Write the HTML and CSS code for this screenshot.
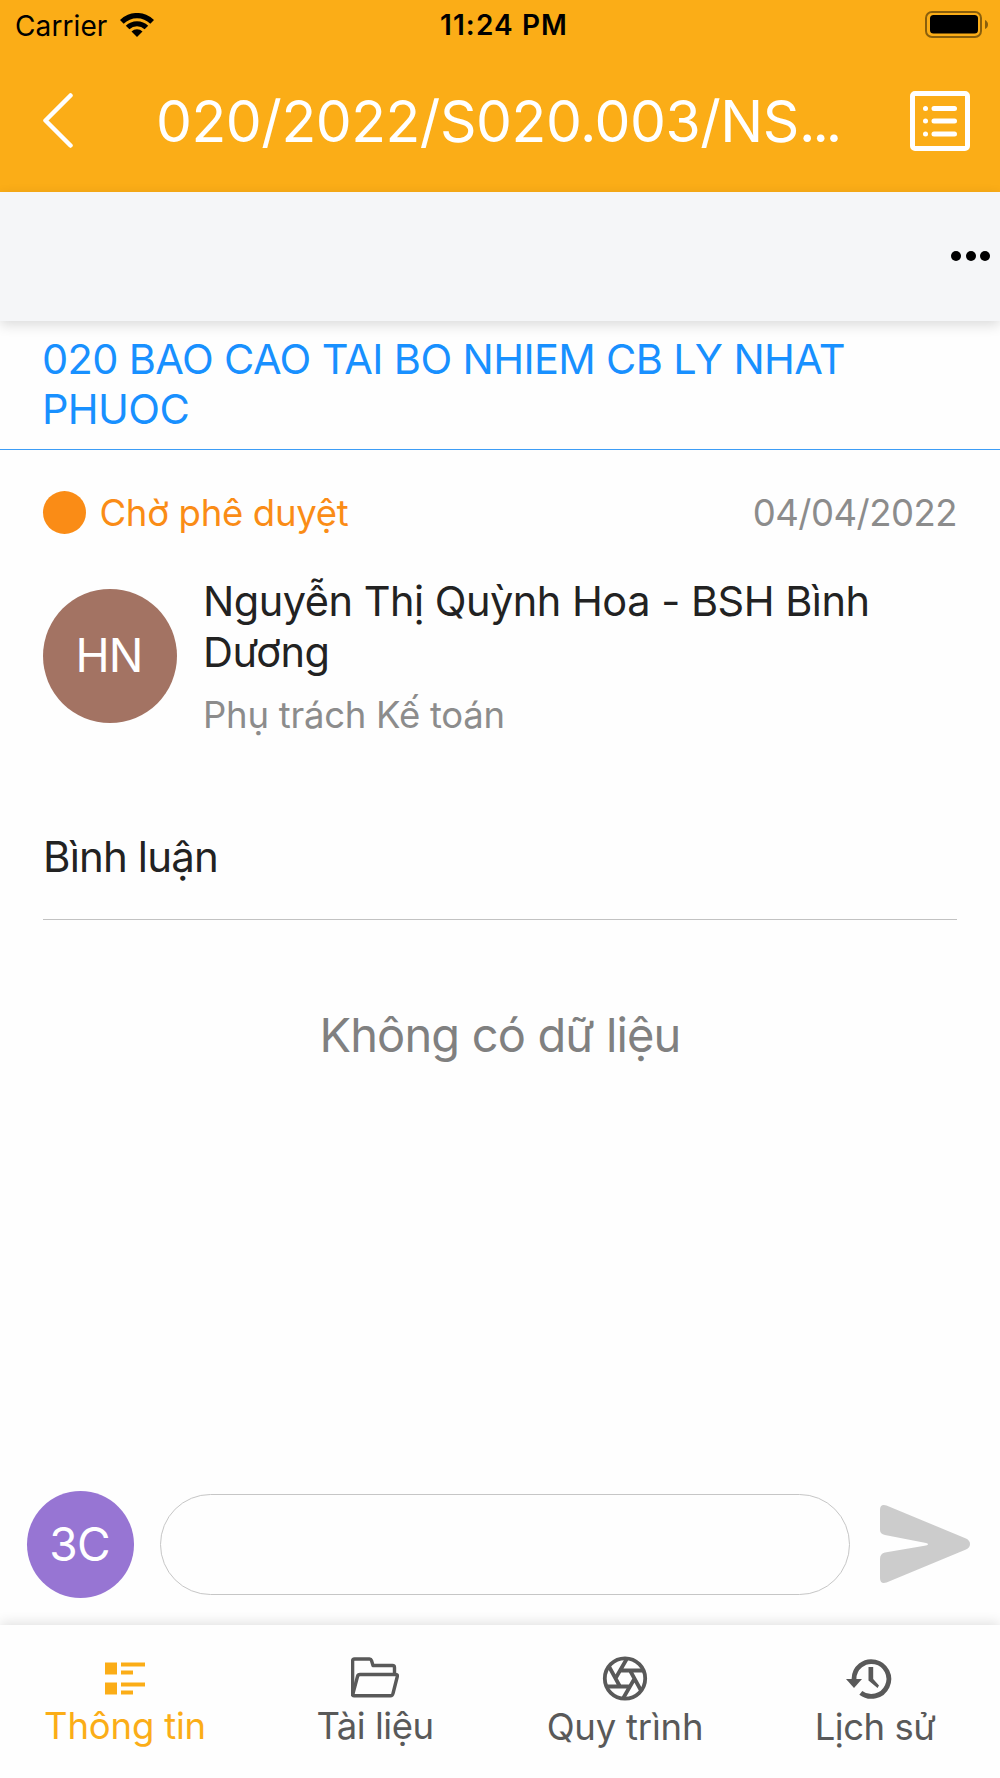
FILE: index.html
```html
<!DOCTYPE html>
<html lang="vi">
<head>
  <meta charset="UTF-8" />
  <meta name="viewport" content="width=device-width, initial-scale=1" />
  <title>Chi tiết văn bản</title>
  <link rel="stylesheet" href="styles.css">
</head>
<body>

  <header>
    <div class="status-bar">
      <div class="status-left">
        <span class="carrier">Carrier</span>
        <svg class="wifi" viewBox="0 0 34 24" width="34" height="24">
          <path d="M0 7 A24 24 0 0 1 34 7 L30.3 10.7 A19 19 0 0 0 3.7 10.7 Z" />
          <path d="M5.8 12.7 A16 16 0 0 1 28.2 12.7 L24.6 16.2 A11 11 0 0 0 9.4 16.2 Z" />
          <path d="M11.5 18.4 A8 8 0 0 1 22.5 18.4 L17 24 Z" />
        </svg>
      </div>
      <span class="clock">11:24 PM</span>
      <div class="status-right">
        <svg class="battery" viewBox="0 0 63 27" width="63" height="27">
          <rect x="1" y="1" width="55" height="25" rx="6" fill="none" stroke="#000" stroke-opacity=".45" stroke-width="2" />
          <rect x="5" y="4" width="48" height="18.5" rx="3.5" />
          <path d="M60 9 Q63 10.5 63 13.5 T60 18 Z" opacity=".45" />
        </svg>
      </div>
    </div>

    <div class="nav-bar">
      <svg class="back" viewBox="0 0 30 55" width="30" height="55">
        <path d="M27.5 2.5 L2.5 27.5 L27.5 52.5" fill="none" stroke="#fff" stroke-width="4.5" stroke-linecap="round" stroke-linejoin="round" />
      </svg>
      <h1>020/2022/S020.003/NS<span class="dots">...</span></h1>
      <svg class="list" viewBox="0 0 60 60" width="60" height="60" fill="none" stroke="#fff" stroke-width="5" stroke-linecap="round">
        <rect x="2.5" y="2.5" width="55" height="55" rx="2.5" />
        <path d="M24 17.5H44.5M24 30H44.5M24 43H44.5" />
        <path d="M15.5 17.5h.01M15.5 30h.01M15.5 43h.01" />
      </svg>
    </div>
  </header>

  <div class="toolbar">
    <div class="more"><i></i><i></i><i></i></div>
  </div>

  <main>
    <h2>020 BAO CAO TAI BO NHIEM CB LY NHAT PHUOC</h2>

    <section class="info">
      <div class="state-row">
        <span class="dot"></span>
        <span class="state">Chờ phê duyệt</span>
        <span class="date">04/04/2022</span>
      </div>
      <div class="person">
        <div class="avatar">HN</div>
        <div class="person-text">
          <p class="name">Nguyễn Thị Quỳnh Hoa - BSH Bình Dương</p>
          <p class="role">Phụ trách Kế toán</p>
        </div>
      </div>
      <h3>Bình luận</h3>
      <p class="empty">Không có dữ liệu</p>
    </section>
  </main>

  <div class="comment-bar">
    <div class="avatar me">3C</div>
    <input type="text" class="comment-input" aria-label="Bình luận" />
    <svg class="send" viewBox="0 0 90 78" width="90" height="78">
      <path d="M0 5 Q0 -1.5 6.5 .5 L86 33.5 Q90 35.5 90 39 T86 44.5 L6.5 77.5 Q0 79.5 0 73 V54 Q0 48.5 5 47.5 L46 40.5 Q50 39 46 38 L5 30 Q0 29 0 25 Z" fill="#ccc" />
    </svg>
  </div>

  <nav>
    <a class="tab active">
      <svg viewBox="0 0 48 48" width="48" height="48" fill="currentColor">
        <path d="M4 8.5h12v12H4zM20 8.5h24v4H20zM20 16.5h12v4H20zM4 28.5h12v12H4zM20 28.5h24v4H20zM20 36.5h12v4H20z" />
      </svg>
      <span>Thông tin</span>
    </a>
    <a class="tab docs">
      <svg viewBox="0 0 48 48" width="48" height="48" fill="none" stroke="currentColor" stroke-width="3.4" stroke-linejoin="round" stroke-linecap="round">
        <path d="M1.6 40V7Q1.6 5 3.5 5H18.500Q20 5 20.500 6.500L22 11.500H41.500Q43.500 11.500 43.500 13.500V20" />
        <path d="M1.6 41L6.5 22.500Q7 20.500 9 20.500H44.500Q46.800 20.500 46.300 22.500L42 39.500Q41.500 41.800 39.500 41.800H3Q1.6 41.800 1.6 40" />
      </svg>
      <span>Tài liệu</span>
    </a>
    <a class="tab flow">
      <svg viewBox="0 0 48 48" width="48" height="48" fill="none" stroke="currentColor" stroke-width="3.8">
        <circle cx="24" cy="24.5" r="20.2" />
        <path d="M26 4.5L15 23.5M42 16.5H19M40 36.5L28.5 15.5M22 44.5L33 25.5M6 32.5H29M8 12.5L19.5 33.5" />
      </svg>
      <span>Quy trình</span>
    </a>
    <a class="tab history">
      <svg viewBox="0 0 48 48" width="48" height="48" fill="none" stroke="currentColor">
        <path d="M8 25A17.4 17.4 0 1 1 14.8 38.8" stroke-width="4.8" />
        <path d="M0 25H16L8 34Z" fill="currentColor" stroke="none" />
        <path d="M22.5 13H27.2V25L33 31.5L31.5 34L22.5 26.5Z" fill="currentColor" stroke="none" />
      </svg>
      <span>Lịch sử</span>
    </a>
  </nav>

</body>
</html>
```
FILE: styles.css
```css
* {
  box-sizing: border-box;
  margin: 0;
  padding: 0;
}

body {
  height: 1778px;
  display: flex;
  flex-direction: column;
  font-family: Inter, "Liberation Sans", sans-serif;
  background: #fefefe;
  color: #222;
  overflow: hidden;
}

h1, h2, h3 {
  font-weight: 400;
}

svg {
  display: block;
  flex: none;
}

header {
  height: 192px;
  background: #fbad17;
  flex: none;
}

.status-bar {
  height: 50px;
  padding: 0 12px 0 15px;
  display: grid;
  grid-template-columns: 1fr auto 1fr;
  align-items: center;
  color: #000;
  font-size: 28px;
}

.status-left {
  display: flex;
  align-items: center;
  gap: 13px;
}

.carrier {
  letter-spacing: 0.1px;
  padding-top: 1px;
}

.status-right {
  display: flex;
  justify-content: flex-end;
}

.battery {
  margin-bottom: 1px;
}

.clock {
  font-weight: 600;
  letter-spacing: 1.1px;
  padding-left: 5px;
}

.nav-bar {
  height: 142px;
  padding: 0 30px 0 43px;
  display: flex;
  align-items: center;
  color: #fff;
}

.nav-bar .back {
  margin-bottom: 1px;
}

.nav-bar h1 {
  flex: 1;
  padding-left: 83px;
  font-size: 57px;
  letter-spacing: -0.45px;
  white-space: nowrap;
}

.nav-bar .dots {
  letter-spacing: -3px;
}

.toolbar {
  height: 129px;
  flex: none;
  background: #f5f6f8;
  box-shadow: 0 4px 12px rgba(0, 0, 0, 0.14);
  display: flex;
  justify-content: flex-end;
  align-items: center;
  padding: 0 10px 1px 0;
}

.more {
  display: flex;
  gap: 4.5px;
}

.more i {
  width: 10px;
  height: 10px;
  border-radius: 50%;
  background: #000;
}

main {
  flex: 1;
}

h2 {
  height: 129px;
  padding: 12.5px 42px 0;
  font-size: 41.5px;
  line-height: 50.6px;
  letter-spacing: -0.63px;
  color: #1890ff;
  border-bottom: 1.5px solid #3d9df6;
}

.info {
  padding: 0 43px;
}

.state-row {
  height: 125px;
  display: flex;
  align-items: center;
  font-size: 36.5px;
}

.dot {
  width: 43px;
  height: 43px;
  border-radius: 50%;
  background: #fa8c16;
  margin-right: 13.5px;
}

.state {
  color: #fa8c16;
  letter-spacing: -0.3px;
}

.date {
  margin-left: auto;
  color: #8c8c8c;
  letter-spacing: -0.5px;
}

.person {
  display: flex;
  align-items: center;
  height: 161px;
}

.avatar {
  width: 134px;
  height: 134px;
  flex: none;
  border-radius: 50%;
  background: #a37363;
  color: #fff;
  font-size: 46px;
  letter-spacing: -0.8px;
  padding: 0 2px 1px 0;
  display: flex;
  align-items: center;
  justify-content: center;
}

.person-text {
  margin-left: 26px;
  padding-top: 2px;
}

.name {
  font-size: 41.5px;
  line-height: 51px;
  letter-spacing: -0.5px;
}

.role {
  margin-top: 15px;
  font-size: 36.5px;
  line-height: 45px;
  letter-spacing: -0.25px;
  color: #8c8c8c;
}

h3 {
  margin-top: 59px;
  height: 125px;
  line-height: 123px;
  font-size: 42px;
  letter-spacing: -0.85px;
  border-bottom: 1px solid #c2c2c2;
}

.empty {
  margin-top: 87px;
  text-align: center;
  font-size: 47px;
  line-height: 56px;
  letter-spacing: -0.85px;
  color: #808080;
}

.comment-bar {
  flex: none;
  display: flex;
  align-items: center;
  height: 160px;
  padding: 0 30px 1px 27px;
}

.avatar.me {
  width: 107px;
  height: 107px;
  background: #9775d3;
}

.comment-input {
  flex: 1;
  height: 101px;
  margin: 0 30px 0 26px;
  padding: 0 40px;
  border: 1.5px solid #c6c6c6;
  border-radius: 51px;
  background: transparent;
  font: inherit;
  font-size: 38px;
  outline: none;
}

.send {
  margin-bottom: 1px;
}

nav {
  flex: none;
  height: 153px;
  padding-top: 29px;
  display: grid;
  grid-template-columns: repeat(4, 1fr);
  background: #fefefe;
  box-shadow: 0 -2px 12px rgba(0, 0, 0, 0.12);
}

.tab {
  display: flex;
  flex-direction: column;
  align-items: center;
  color: #595959;
  font-size: 36.5px;
  line-height: 49px;
  letter-spacing: -0.2px;
}

.tab.active {
  color: #fbad17;
}

.tab.docs {
  letter-spacing: -0.5px;
}

.tab.flow {
  line-height: 50px;
}

.tab.history {
  letter-spacing: -0.5px;
  line-height: 50px;
}

.tab.history svg {
  margin-right: 11px;
}
```
